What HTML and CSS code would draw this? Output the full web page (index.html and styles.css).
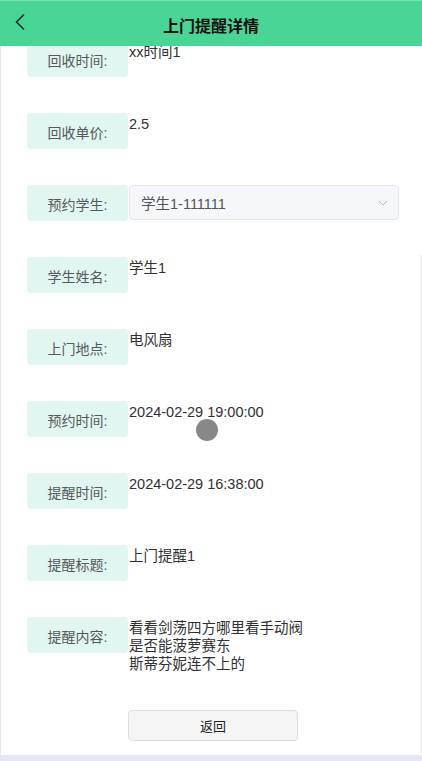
FILE: index.html
```html
<!DOCTYPE html>
<html lang="zh-CN">
<head>
<meta charset="utf-8">
<title>上门提醒详情</title>
<link rel="stylesheet" href="styles.css">
</head>
<body>
<header class="topbar">
  <span class="back">
    <svg width="12" height="18" viewBox="0 0 12 18"><path d="M10 1.5 L2.5 9 L10 16.5" fill="none" stroke="#1f2f28" stroke-width="1.6"/></svg>
  </span>
  <h1 class="title">上门提醒详情</h1>
</header>
<main class="panel">
  <div class="form">
    <div class="row"><div class="label">回收时间:</div><div class="value">xx时间1</div></div>
    <div class="row"><div class="label">回收单价:</div><div class="value">2.5</div></div>
    <div class="row"><div class="label">预约学生:</div>
      <div class="select"><span>学生1-111111</span>
        <svg width="10" height="6" viewBox="0 0 10 6"><path d="M1 1 L5 5 L9 1" fill="none" stroke="#b4b8bf" stroke-width="1"/></svg>
      </div>
    </div>
    <div class="row"><div class="label">学生姓名:</div><div class="value">学生1</div></div>
    <div class="row"><div class="label">上门地点:</div><div class="value">电风扇</div></div>
    <div class="row"><div class="label">预约时间:</div><div class="value">2024-02-29 19:00:00</div></div>
    <div class="row"><div class="label">提醒时间:</div><div class="value">2024-02-29 16:38:00</div></div>
    <div class="row"><div class="label">提醒标题:</div><div class="value">上门提醒1</div></div>
    <div class="row"><div class="label">提醒内容:</div><div class="value">看看剑荡四方哪里看手动阀<br>是否能菠萝赛东<br>斯蒂芬妮连不上的</div></div>
  </div>
  <div class="actions"><button class="btn">返回</button></div>
  <span class="edge"></span>
</main>
<span class="touch"></span>
</body>
</html>
```
FILE: styles.css
```css
* { box-sizing: border-box; }
html, body { margin: 0; padding: 0; }
body {
  background: #e4e8f3;
  font-family: "Liberation Sans", "Noto Sans CJK SC", sans-serif;
  width: 422px;
  height: 761px;
  overflow: hidden;
}
.topbar {
  position: fixed;
  top: 0; left: 0; right: 0;
  height: 46px;
  background: #49d596;
  border-top: 1px solid #7fe0b6;
  display: flex;
  align-items: center;
  justify-content: center;
  z-index: 5;
}
.back {
  position: absolute;
  left: 14px;
  top: 12px;
  display: flex;
}
.title {
  margin: 0;
  font-size: 16px;
  font-weight: bold;
  color: #111;
  padding-top: 2px;
}
.panel {
  position: relative;
  margin-left: 1px;
  width: 421px;
  height: 755px;
  background: #fff;
  padding-top: 41px;
}
.form {
  display: flex;
  flex-direction: column;
  gap: 36px;
  padding-left: 26px;
}
.row {
  display: flex;
  align-items: flex-start;
  gap: 1px;
}
.label {
  width: 101px;
  height: 36px;
  flex: none;
  background: #e2f6f1;
  border-radius: 4px;
  color: #55585c;
  font-size: 14px;
  display: flex;
  align-items: center;
  justify-content: center;
  padding-top: 2px;
}
.value {
  font-size: 14.5px;
  line-height: 18px;
  color: #303133;
  padding-top: 2px;
}
.select {
  width: 270px;
  height: 35px;
  background: #f5f7fa;
  border: 1px solid #e4e7ed;
  border-radius: 4px;
  display: flex;
  align-items: center;
  justify-content: space-between;
  padding: 0 10px 0 11px;
  color: #505256;
  font-size: 14.5px;
}
.actions {
  padding-left: 127px;
  padding-top: 37px;
}
.btn {
  width: 170px;
  height: 31px;
  background: #f5f5f5;
  border: 1px solid #dedede;
  border-radius: 4px;
  font-family: inherit;
  font-size: 13px;
  color: #222;
  padding: 0;
}
.edge {
  position: absolute;
  right: 0;
  top: 255px;
  bottom: 2px;
  width: 1px;
  background: #e3e3e3;
}
.touch {
  position: absolute;
  left: 196px;
  top: 419px;
  width: 22px;
  height: 22px;
  border-radius: 50%;
  background: #888;
  filter: blur(0.6px);
  z-index: 6;
}
```
